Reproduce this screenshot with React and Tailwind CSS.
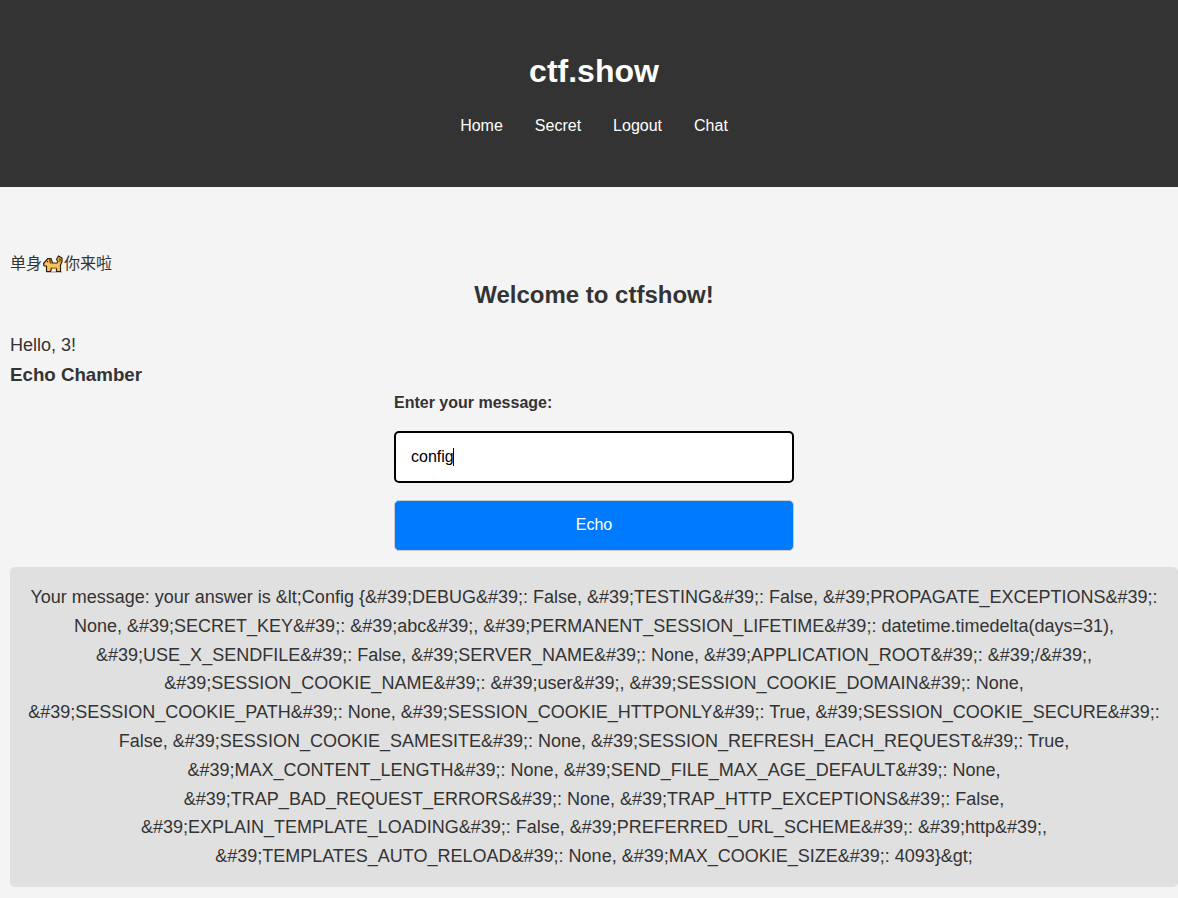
import React from 'react';

const FONT = 'font-["Liberation_Sans","Noto_Sans_CJK_SC",sans-serif]';

const message =
    "Your message: your answer is &lt;Config {&#39;DEBUG&#39;: False, &#39;TESTING&#39;: False, &#39;PROPAGATE_EXCEPTIONS&#39;: None, &#39;SECRET_KEY&#39;: &#39;abc&#39;, &#39;PERMANENT_SESSION_LIFETIME&#39;: datetime.timedelta(days=31), &#39;USE_X_SENDFILE&#39;: False, &#39;SERVER_NAME&#39;: None, &#39;APPLICATION_ROOT&#39;: &#39;/&#39;, &#39;SESSION_COOKIE_NAME&#39;: &#39;user&#39;, &#39;SESSION_COOKIE_DOMAIN&#39;: None, &#39;SESSION_COOKIE_PATH&#39;: None, &#39;SESSION_COOKIE_HTTPONLY&#39;: True, &#39;SESSION_COOKIE_SECURE&#39;: False, &#39;SESSION_COOKIE_SAMESITE&#39;: None, &#39;SESSION_REFRESH_EACH_REQUEST&#39;: True, &#39;MAX_CONTENT_LENGTH&#39;: None, &#39;SEND_FILE_MAX_AGE_DEFAULT&#39;: None, &#39;TRAP_BAD_REQUEST_ERRORS&#39;: None, &#39;TRAP_HTTP_EXCEPTIONS&#39;: False, &#39;EXPLAIN_TEMPLATE_LOADING&#39;: False, &#39;PREFERRED_URL_SCHEME&#39;: &#39;http&#39;, &#39;TEMPLATES_AUTO_RELOAD&#39;: None, &#39;MAX_COOKIE_SIZE&#39;: 4093}&gt;";

// the dog emoji, no colour emoji font is installed
const Dog = () => (
    <svg width="22" height="18" viewBox="0 0 22 18" className="inline-block align-[-4px]" role="img" aria-label="dog">
        <path d="M4 17h16" stroke="#8a8a8a" strokeWidth="1.5" opacity="0.6" />
        <path d="M1.5 8.5 6 3.5h3l1.5 4.5h4.5l1-1.5-1.5-2L16.5 1 20 3v3.5L18.5 10v6.5h-4V13h-5l-1 3.5h-4V11H2z" fill="#f7c25f" stroke="#2e2009" strokeWidth="1.2" strokeLinejoin="round" />
        <path d="M6.5 4H9l1 4-2 1z" fill="#8f5c17" />
        <path d="M16.5 2.5 19 4v2l-1.5 1.5L17 5z" fill="#8f5c17" />
        <path d="M9.5 12h5.5v1.5H9.5z" fill="#d6952f" />
        <rect x="5" y="6" width="1.2" height="1.2" fill="#1c1c1c" />
    </svg>
);

const links = ['Home', 'Secret', 'Logout', 'Chat'];

export default function App() {
    return (
        <div className={`${FONT} min-h-[898px] bg-[#f4f4f4] text-[#333] overflow-hidden`}>
            <header className="h-[187px] bg-[#333] pt-[53px] pl-[10px] text-center text-white">
                <h1 className="text-[32px] leading-[37px] font-bold">ctf.show</h1>
                <nav className="mt-[26px] flex justify-center gap-8 text-base leading-[20px]">
                    {links.map((l) => (
                        <a key={l} href="#" className="text-white">{l}</a>
                    ))}
                </nav>
            </header>

            <main className="pl-[10px] pt-[64px]">
                <p className="text-base leading-[26px]">单身<Dog />你来啦</p>
                <h2 className="mt-[4px] text-center text-2xl leading-[28px] font-bold">Welcome to ctfshow!</h2>
                <p className="mt-[22px] text-lg leading-[29px]">Hello, 3!</p>
                <h3 className="text-[18.72px] leading-[29px] font-bold">Echo Chamber</h3>

                <form className="mx-auto mt-[5px] w-[400px]">
                    <label htmlFor="msg" className="block text-base leading-[18px] font-bold">Enter your message:</label>
                    <div className="relative mt-[19px]">
                        <input
                            id="msg"
                            defaultValue="config"
                            className="block h-[52px] w-full rounded-[5px] border-2 border-black bg-white px-[15px] text-base text-black outline-none"
                        />
                        {/* text caret */}
                        <span className="absolute left-[59px] top-[17px] h-[18px] w-px bg-black" />
                    </div>
                    <button type="button" className="mt-[17px] block h-[51px] w-full rounded-[5px] border border-[#ccc] bg-[#007bff] pb-[2px] text-base text-white">
                        Echo
                    </button>
                </form>

                <div className="mt-4 rounded-[5px] bg-[#e0e0e0] p-4 text-center text-lg leading-[28.8px] break-words">
                    {message}
                </div>
            </main>
        </div>
    );
}
